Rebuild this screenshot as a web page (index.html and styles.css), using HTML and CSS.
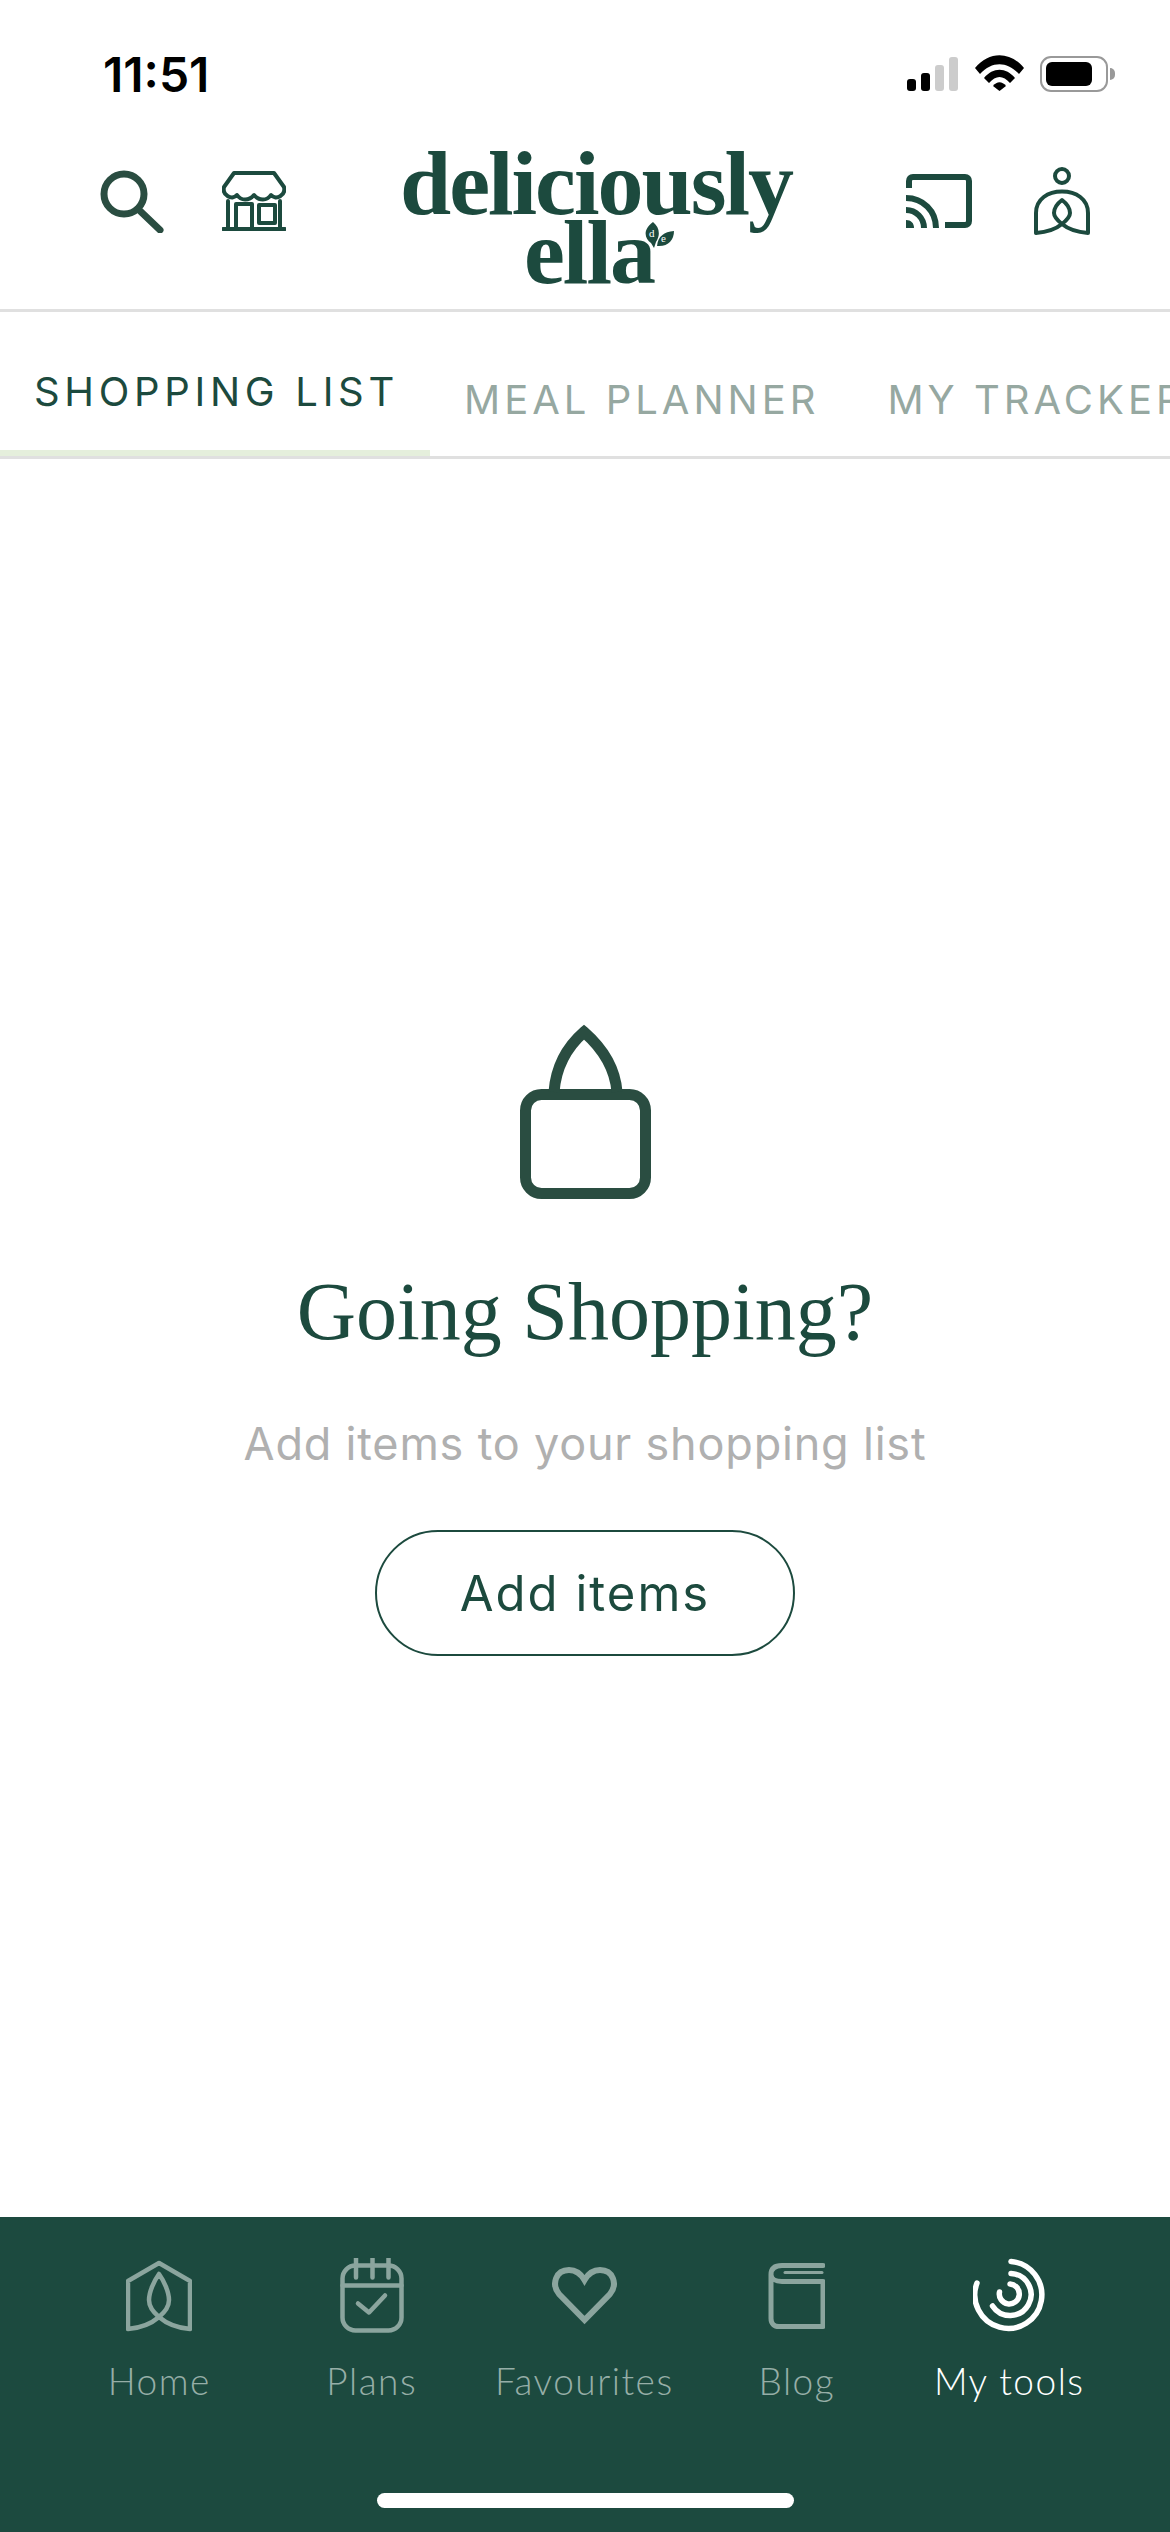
FILE: index.html
```html
<!DOCTYPE html>
<html>
<head>
    <title>Shopping list</title>
    <link rel="stylesheet" href="styles.css">
</head>
<body>
    <div class="status-bar">
        <span class="time">11:51</span>
        <div class="status-icons">
            <div class="signal">
                <span class="bar bar-1"></span>
                <span class="bar bar-2"></span>
                <span class="bar bar-3 off"></span>
                <span class="bar bar-4 off"></span>
            </div>
            <svg class="wifi" width="49" height="36" viewBox="0 0 49 36">
                <path d="M0 13 C14 -4 35 -4 49 13 L44 19 C32 6 17 6 5 19 Z"/>
                <path d="M9 23 C18 12 31 12 40 23 L35 28 C28 20 21 20 14 28 Z"/>
                <path d="M18 31 C22 26 27 26 31 31 L24.500 36 Z"/>
            </svg>
            <div class="battery"><span class="battery-fill"></span></div>
            <span class="battery-nub"></span>
        </div>
    </div>

    <header class="app-header">
        <div class="header-icons left">
            <svg width="64" height="63" viewBox="0 0 64 63" class="line-icon search">
                <circle cx="24" cy="24" r="20"/>
                <path d="M38 39 L60 60"/>
            </svg>
            <svg width="64" height="60" viewBox="0 0 64 60" class="line-icon thin">
                <path d="M12 2 H52 L62 16 C64 24 54 30 49 24 C45 30 37 30 32 24 C27 30 19 30 15 24 C10 30 0 24 2 16 Z"/>
                <path d="M6 30 V58 M58 30 V58 M1 58 H63"/>
                <path d="M14 58 V33 H30 V58"/>
                <path d="M37 34 H53 V52 H37 Z"/>
            </svg>
        </div>

        <div class="logo">
            <span class="logo-line">deliciously</span>
            <span class="logo-line second">ella</span>
            <svg class="logo-leaf" width="30" height="27" viewBox="0 0 30 27">
                <path d="M9 0 C15 5 17 12 12 20 L10 26 L7 21 C1 17 -2 8 9 0 Z"/>
                <path d="M13 24 C14 14 20 10 30 9 C30 18 24 25 13 24 Z"/>
                <text x="5" y="15" class="leaf-text">d</text>
                <text x="17" y="20" class="leaf-text">e</text>
            </svg>
        </div>

        <div class="header-icons right">
            <svg width="66" height="54" viewBox="0 0 66 54" class="cast">
                <path class="cast-frame" d="M3 14 V7 C3 4.500 4.500 3 7 3 H59 C61.500 3 63 4.500 63 7 V47 C63 49.500 61.500 51 59 51 H39"/>
                <path class="cast-frame" d="M0 24 C17 24 30 37 30 54"/>
                <path class="cast-frame" d="M0 36 C10 36 18 44 18 54"/>
                <path class="cast-dot" d="M0 46 C5 46 8 49 8 54 H0 Z"/>
            </svg>
            <svg width="56" height="68" viewBox="0 0 56 68" class="line-icon mid">
                <circle cx="28" cy="9" r="7"/>
                <path d="M2 66 V46 C2 32 14 24.500 28 24.500 C42 24.500 54 32 54 46 V66 C42 65 34 62 28 57 C33 53 36 50 36 46 C36 41 32 36 28 33 C24 36 20 41 20 46 C20 49 23 53 28 57 C22 62 14 65 2 66 Z"/>
            </svg>
        </div>
    </header>

    <nav class="tabs">
        <a class="tab active">SHOPPING LIST</a>
        <a class="tab">MEAL PLANNER</a>
        <a class="tab">MY TRACKER</a>
    </nav>

    <main class="empty-state">
        <svg width="131" height="175" viewBox="0 0 131 175" class="bag">
            <rect x="5.500" y="70.500" width="120" height="99" rx="16"/>
            <path d="M34 68 C36 42 48 22 64 8 C80 22 95 42 97 68"/>
        </svg>
        <h2 class="empty-title">Going Shopping?</h2>
        <p class="empty-text">Add items to your shopping list</p>
        <button class="add-button">Add items</button>
    </main>

    <footer class="bottom-nav">
        <div class="nav-items">
            <div class="nav-item">
                <svg width="66" height="71" viewBox="0 0 66 71" class="nav-icon">
                    <path d="M2 69 C14 68 25 64 33 57 C27 52 23 46 23 40 C23 32 28 21 33 14 C38 21 43 32 43 40 C43 46 39 52 33 57 C41 64 52 68 64 69 V21 L33 3 L2 21 Z"/>
                </svg>
                <span>Home</span>
            </div>
            <div class="nav-item">
                <svg width="64" height="74" viewBox="0 0 64 74" class="nav-icon">
                    <rect x="2.500" y="7" width="59" height="65" rx="13"/>
                    <path d="M2.500 27 H61.500 M16 0 V19 M32.500 0 V19 M48.500 0 V19"/>
                    <path d="M18 45 L29 54 L45 37"/>
                </svg>
                <span>Plans</span>
            </div>
            <div class="nav-item">
                <svg width="65" height="59" viewBox="0 0 65 59" class="nav-icon heart">
                    <path d="M32.500 54 L7 28 C-1 18 4 4 17 4 C24 4 29 8 32.500 14 C36 8 41 4 48 4 C61 4 66 18 58 28 Z"/>
                </svg>
                <span>Favourites</span>
            </div>
            <div class="nav-item">
                <svg width="57" height="66" viewBox="0 0 57 66" class="nav-icon blog">
                    <path d="M55 3 H14 C7 3 3 6 3 12 V56 C3 61 6 64 11 64 H55 V19 H14 C7 19 3 16 3 12"/>
                    <path class="blog-line" d="M17 10 H54"/>
                </svg>
                <span>Blog</span>
            </div>
            <div class="nav-item active">
                <svg width="72" height="75" viewBox="0 0 72 75" class="nav-icon tools">
                    <path d="M4 25 A33.500 33.500 0 1 0 38 3.500"/>
                    <path d="M19.500 48 A21 21 0 1 0 38 15.500"/>
                    <path d="M26.500 34 A10 10 0 1 0 37 26"/>
                </svg>
                <span>My tools</span>
            </div>
        </div>
        <div class="home-indicator"></div>
    </footer>
</body>
</html>
```

FILE: styles.css
```css
* {
    box-sizing: border-box;
}

html, body {
    margin: 0;
    height: 2532px;
}

body {
    width: 1170px;
    display: flex;
    flex-direction: column;
    background: #fff;
    font-family: Inter, "Liberation Sans", sans-serif;
    color: #1c4a3e;
    overflow: hidden;
}

/* status bar */
.status-bar {
    height: 110px;
    padding: 55px 55px 0 103px;
    display: flex;
    justify-content: space-between;
    align-items: flex-start;
    flex-shrink: 0;
}

.time {
    font-size: 48px;
    font-weight: 600;
    line-height: 40px;
    color: #000;
}

.status-icons {
    display: flex;
    align-items: flex-start;
}

.signal {
    width: 51px;
    height: 34px;
    margin: 2px 17px 0 0;
    display: flex;
    justify-content: space-between;
    align-items: flex-end;
}

.bar {
    width: 9px;
    background: #000;
    border-radius: 3px;
}

.bar-1 { height: 12px; }
.bar-2 { height: 18px; }
.bar-3 { height: 26px; }
.bar-4 { height: 34px; }

.bar.off {
    background: #ccc;
}

.wifi {
    fill: #000;
    margin-right: 16px;
}

.battery {
    width: 68px;
    height: 36px;
    margin-top: 1px;
    padding: 4px;
    border: 2.500px solid #999;
    border-radius: 11px;
}

.battery-fill {
    display: block;
    width: 46px;
    height: 100%;
    background: #000;
    border-radius: 6px;
}

.battery-nub {
    width: 5px;
    height: 12px;
    margin: 13px 0 0 2px;
    background: #999;
    border-radius: 0 6px 6px 0;
}

/* header */
.app-header {
    height: 202px;
    padding: 0 80px 0 100px;
    display: flex;
    justify-content: space-between;
    align-items: flex-start;
    border-bottom: 3px solid #e0e0e0;
    flex-shrink: 0;
}

.header-icons {
    display: flex;
    align-items: center;
    height: 68px;
}

.header-icons.left {
    margin-top: 57px;
    gap: 58px;
}

.header-icons.right {
    margin-top: 57px;
    gap: 62px;
}

.line-icon {
    fill: none;
    stroke: #1c4a3e;
    stroke-width: 4;
    stroke-linejoin: round;
    stroke-linecap: round;
}

.line-icon.search {
    stroke: #2a4d41;
    stroke-width: 7;
}

.cast-frame {
    fill: none;
    stroke: #1c4a3e;
    stroke-width: 6;
}

.cast-dot {
    fill: #1c4a3e;
}

.logo {
    position: relative;
    width: 393px;
    margin-top: 37px;
    display: flex;
    flex-direction: column;
    align-items: center;
    font-family: "Liberation Serif", serif;
    font-weight: 700;
    font-size: 92px;
    line-height: 72px;
    letter-spacing: -2px;
}

.logo-line {
    display: block;
    white-space: nowrap;
}

.logo-line.second {
    margin: -3px 14px 0 0;
}

.logo-leaf {
    position: absolute;
    left: 244px;
    top: 75px;
    fill: #1c4a3e;
}

.leaf-text {
    font-family: "Liberation Serif", serif;
    font-size: 11px;
    font-weight: 400;
    letter-spacing: 0;
    fill: #fff;
}

/* tabs */
.tabs {
    height: 147px;
    display: flex;
    border-bottom: 3px solid #e0e0e0;
    flex-shrink: 0;
    overflow: hidden;
    align-items: flex-start;
}

.tab {
    flex-shrink: 0;
    font-size: 40px;
    letter-spacing: 4px;
    color: #96a8a1;
    white-space: nowrap;
    padding: 65px 34px 0 0;
    margin-left: 34px;
    line-height: 46px;
}

.tab.active {
    width: 430px;
    height: 147px;
    margin: 0 0 -3px;
    padding: 57px 0 0 34px;
    letter-spacing: 4.700px;
    color: #1c4a3e;
    border-bottom: 9px solid #e5efdc;
}

/* empty state */
.empty-state {
    flex: 1;
    padding-top: 565px;
    display: flex;
    flex-direction: column;
    align-items: center;
}

.bag {
    fill: none;
    stroke: #2a4d41;
    stroke-width: 11;
    margin-bottom: 63px;
}

.empty-title {
    margin: 0;
    font-family: "Liberation Serif", serif;
    font-weight: 400;
    font-size: 82px;
    line-height: 100px;
    color: #1c4a3e;
}

.empty-text {
    margin: 55px 0 0;
    font-size: 45px;
    letter-spacing: 0.800px;
    line-height: 54px;
    color: #b0b0b0;
}

.add-button {
    width: 420px;
    height: 126px;
    margin-top: 59px;
    background: #fff;
    border: 2px solid #1c4a3e;
    border-radius: 63px;
    font-family: Inter, "Liberation Sans", sans-serif;
    font-size: 49px;
    letter-spacing: 2px;
    color: #1c4a3e;
}

/* bottom nav */
.bottom-nav {
    height: 315px;
    flex-shrink: 0;
    padding: 41px 53px 0;
    background: #1c4a3f;
}

.nav-items {
    height: 235px;
    display: flex;
}

.nav-item {
    width: 212.500px;
    display: flex;
    flex-direction: column;
    align-items: center;
    font-family: Lato, sans-serif;
    font-weight: 300;
    font-size: 37px;
    letter-spacing: 1.500px;
    color: #96aea7;
    white-space: nowrap;
}

.nav-item svg {
    height: 75px;
    margin-bottom: 25px;
}

.nav-item.active {
    color: #fff;
}

.nav-icon {
    fill: none;
    stroke: #8ba59e;
    stroke-width: 4.500;
    stroke-linejoin: round;
    stroke-linecap: round;
}

.nav-icon.heart {
    stroke-width: 6;
    stroke-linejoin: miter;
}

.nav-icon.blog {
    stroke-width: 5;
}

.nav-icon .blog-line {
    stroke-width: 3;
}

.nav-icon.tools {
    stroke: #fff;
    stroke-width: 5.500;
}

.home-indicator {
    width: 417px;
    height: 15px;
    margin: 0 auto;
    background: #fff;
    border-radius: 8px;
}
```
